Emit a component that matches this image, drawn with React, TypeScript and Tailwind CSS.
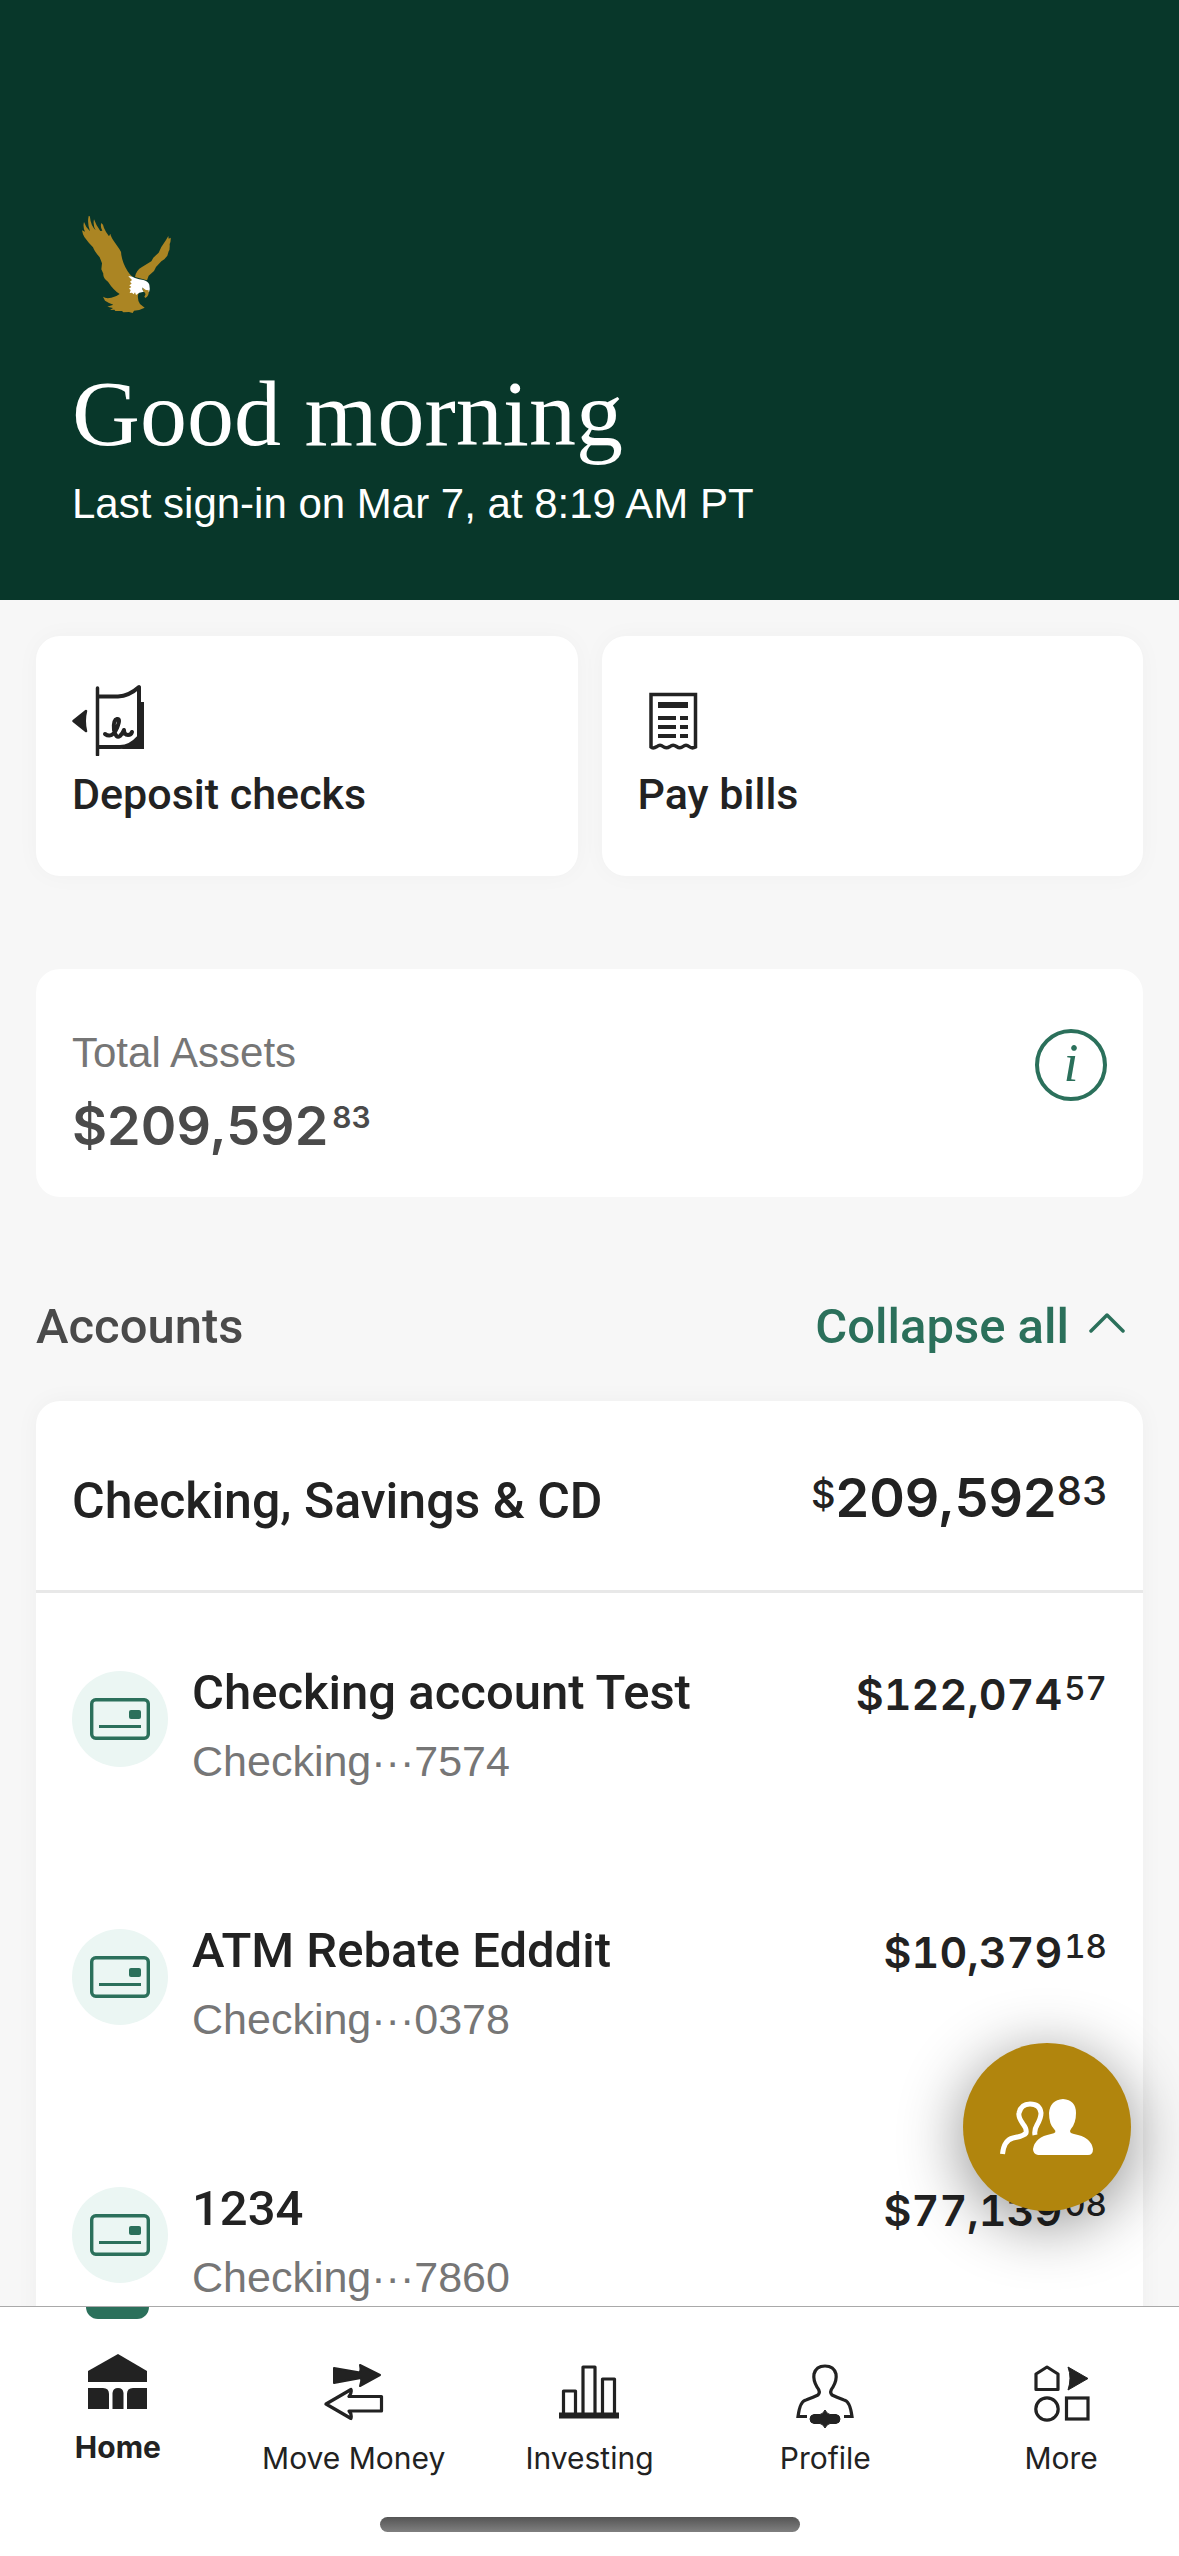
import type { ReactNode } from "react";

const accounts = [
  { name: "Checking account Test", detail: "Checking···7574", dollars: "$122,074", cents: "57" },
  { name: "ATM Rebate Edddit", detail: "Checking···0378", dollars: "$10,379", cents: "18" },
  { name: "1234", detail: "Checking···7860", dollars: "$77,139", cents: "08" },
];

function EagleLogo() {
  return (
    <svg viewBox="36 45 300 300" className="h-[100px] w-[100px]" aria-label="Eagle logo" role="img">
      <path
        fill="#ab8523"
        d="M66 91 L75 95 Q68 80 72 66 Q78 84 90 94 Q81 70 86 48 Q90 47 90 52 Q92 76 107 91 Q98 74 102 58 Q108 76 121 93 L127 92 Q120 80 124 69 Q130 72 132 84 Q136 94 147 109 L151 101 Q153 112 165 128 L178 147 Q184 154 184 165 Q188 190 203 214 Q210 225 217 230 L240 262 L234 285 Q232 300 240 312 L254 323 Q240 331 222 332 L218 339 L207 336 L190 337 L186 333 L166 333 L163 329 L150 330 L159 324 L142 320 L160 314 L147 309 L135 302 L129 290 Q138 297 154 293 Q170 290 179 282 Q160 270 144 245 Q128 234 130 221 L124 208 L126 190 L119 172 Q103 154 99 142 L87 129 L73 111 L69 103 Z"
      />
      <path
        fill="#ab8523"
        d="M225 231 Q228 211 246 201 L274 184 L280 173 L296 158 L304 141 L318 120 L325 108 L326 116 L332 113 Q333 124 329 132 Q330 150 326 154 L322 167 L313 178 L304 184 L288 201 L282 213 L266 227 L261 241 Z"
      />
      <path
        fill="#fff"
        d="M205 229 Q215 227 225 234 Q237 238 250 240 Q264 243 268 254 Q271 265 267 277 L256 274 Q249 267 247 262 Q246 271 252 276 Q240 274 228 285 L225 277 L221 283 L216 278 L209 279 L212 270 L207 266 L214 261 L208 256 L215 251 L210 245 L216 240 Z"
      />
      <path fill="#ab8523" d="M248 263 Q256 271 266 271 Q268 288 256 294 L253 290 Q259 283 255 278 Q248 275 248 263 Z" />
    </svg>
  );
}

function DepositIcon() {
  return (
    <svg viewBox="0 0 72 72" className="h-[72px] w-[72px]" fill="none" stroke="#222" aria-hidden="true">
      <path d="M1.500 37 L14 27 Q11.500 37 14 47 Z" fill="#222" strokeWidth="2.500" strokeLinejoin="round" />
      <path d="M25.500 4 V71" strokeWidth="3.500" strokeLinecap="round" />
      <path d="M26 12.500 H46 Q57 12 67 3 V53 Q58 63 48 63 H26" strokeWidth="4" strokeLinejoin="round" />
      <path d="M67 18 H72 V65 H48 Q60 62 66 53 Z" fill="#222" stroke="none" />
      <path
        d="M33 50 Q40 55 45 44 Q49 34 45 35 Q41 36 42 46 Q44 55 48 52 Q51 49 52 46 Q52 51 56 51 Q59 51 60 48"
        strokeWidth="4"
        strokeLinecap="round"
        strokeLinejoin="round"
      />
    </svg>
  );
}

function BillIcon() {
  return (
    <svg viewBox="0 0 72 72" className="h-[72px] w-[72px]" fill="none" stroke="#222" aria-hidden="true">
      <path
        d="M13 63 V10.500 H57.500 V63 Q54 65 51 62.500 Q48 60 45 62.500 Q42 65 38.500 62.500 Q35 60 32 62.500 Q28 65 25 62.500 Q22 60 19 62.500 Q15 65 13 63 Z"
        strokeWidth="3.500"
      />
      <path d="M20 21 H50" strokeWidth="6" />
      <path d="M20 34 H38 M42 34 H50 M20 43 H38 M42 43 H50 M20 52 H38 M42 52 H50" strokeWidth="4" />
    </svg>
  );
}

function AccountIcon() {
  return (
    <span className="flex size-24 shrink-0 items-center justify-center rounded-full bg-[#ebf6f3]">
      <svg viewBox="0 0 60 42" className="h-[42px] w-[60px]" fill="none" stroke="#2b705b" aria-hidden="true">
        <rect x="1.700" y="1.700" width="56.600" height="38.600" rx="4" strokeWidth="3.400" />
        <path d="M9 28.500 H51" strokeWidth="3" />
        <rect x="39" y="12" width="12" height="9" rx="2" fill="#2b705b" stroke="none" />
      </svg>
    </span>
  );
}

function HomeIcon() {
  return (
    <svg viewBox="0 0 60 60" className="size-[60px]" fill="#222" aria-hidden="true">
      <path d="M0 20 L30 3 L59 20 V31 H0 Z" />
      <path d="M0 37 H15 Q21 37 21 43 V58 H0 Z M59 37 H45 Q39 37 39 43 V58 H59 Z" />
      <path d="M24.500 58 V42 Q25 37 30 37 Q35 37 35.500 42 V58 Z" />
    </svg>
  );
}

function MoveIcon() {
  return (
    <svg viewBox="0 0 60 60" className="size-[60px]" fill="none" stroke="#222" strokeLinejoin="round" aria-hidden="true">
      <path d="M10 5 L36 9.500 Q37 6 36 2 L56 12 L36 23 Q38 18 37 15 L10 20 Z" fill="#222" strokeWidth="2" />
      <path d="M2 41 L27 26.500 Q28 30 25 33.500 H57.500 V48 H25 Q28 51 27 55.500 Z" strokeWidth="3.200" />
    </svg>
  );
}

function InvestIcon() {
  return (
    <svg viewBox="0 0 60 60" className="size-[60px]" fill="none" stroke="#222" aria-hidden="true">
      <path d="M0 52.500 H60" strokeWidth="6" />
      <path d="M4.500 50 V28 H16.500 V50 M24 50 V4 H36 V50 M43.500 50 V16 H55.500 V50" strokeWidth="3.200" strokeLinejoin="round" />
    </svg>
  );
}

function ProfileIcon() {
  return (
    <svg viewBox="0 0 60 66" className="h-[66px] w-[60px]" fill="none" stroke="#222" aria-hidden="true">
      <path
        d="M12 53.500 H3 Q5 38 11 37 Q19 34 23 32 Q26 29 22 24 Q18 17 19 11 Q21 3 30 3 Q39 3 41 11 Q42 17 38 24 Q34 29 37 32 Q41 34 49 37 Q55 38 57 53.500 H49"
        strokeWidth="3.200"
      />
      <path
        d="M30 47 Q32 51 35 51.500 H41 Q45 52 45 56 Q45 60 41 60.500 H35 Q32 61 30 65 Q28 61 25 60.500 H19 Q15 60 15 56 Q15 52 19 51.500 H25 Q28 51 30 47 Z"
        fill="#222"
        strokeWidth="1"
      />
    </svg>
  );
}

function MoreIcon() {
  return (
    <svg viewBox="0 0 60 60" className="size-[60px]" fill="none" stroke="#222" aria-hidden="true">
      <path d="M5 26.500 V11 L16 4 L27 11 V26.500 Z" strokeWidth="3.200" strokeLinejoin="round" />
      <path d="M37 4 L57 15.500 L37 27 Q41 15 37 4 Z" fill="#222" strokeWidth="1" strokeLinejoin="round" />
      <circle cx="16" cy="46" r="11.200" strokeWidth="3.200" />
      <rect x="35.500" y="35" width="21.500" height="21" strokeWidth="3.200" />
    </svg>
  );
}

function PeopleIcon() {
  return (
    <svg viewBox="0 0 96 60" className="h-[60px] w-[96px]" fill="none" aria-hidden="true">
      <path
        d="M3.500 57 Q5 43 14 41 Q25 39 27 36 Q28 32 24 27 Q19 20 20 16 Q22 7 31 7 Q41 7 42 16 Q42 21 38 28 Q35 33 36 38"
        stroke="#fff"
        strokeWidth="5"
      />
      <path
        fill="#fff"
        d="M64 2 Q77 3 77 16 Q77 26 72 32 Q69 36 75 37 Q92 40 94 52 Q94 58 89 58 H39 Q34 57 34 52 Q36 40 52 37 Q59 36 55 32 Q50 27 50 16 Q51 3 64 2 Z"
      />
    </svg>
  );
}

function ActionCard({ icon, label }: { icon: ReactNode; label: string }) {
  return (
    <button
      type="button"
      className="flex h-60 flex-1 flex-col items-start rounded-3xl bg-white px-9 pt-12 text-left shadow-[0_0_24px_rgba(0,0,0,0.03)]"
    >
      {icon}
      <span className="mt-[11px] font-[Roboto,sans-serif] text-[43px] leading-[54px] font-medium">{label}</span>
    </button>
  );
}

function NavItem({ icon, label, active = false }: { icon: ReactNode; label: string; active?: boolean }) {
  return (
    <li className="flex-1">
      <a
        href="#"
        aria-current={active ? "page" : undefined}
        className="flex flex-col items-center font-[Inter,sans-serif] text-[30px] leading-10"
      >
        <span className={active ? "h-3 w-[63px] rounded-b-xl bg-[#2b705b]" : "h-3"} />
        <span className={active ? "mt-8 flex h-[66px] items-start" : "mt-11 flex h-[66px] items-start"}>{icon}</span>
        <span className={active ? "mt-[10px] font-bold" : "mt-[9px]"}>{label}</span>
      </a>
    </li>
  );
}

export default function App() {
  return (
    <div className="flex h-screen flex-col bg-[#f7f7f7] font-['Liberation_Sans',sans-serif] text-[#222]">
      <div className="relative min-h-0 flex-1">
        <main className="h-full overflow-y-auto [scrollbar-width:none]">
          <header className="h-[600px] bg-[#08372a] px-[72px] pt-[215px] text-white">
            <EagleLogo />
            <h1 className="mt-12 font-['Liberation_Serif',serif] text-[94px] leading-[100px]">Good morning</h1>
            <p className="mt-4 text-[42px] leading-[50px]">Last sign-in on Mar 7, at 8:19 AM PT</p>
          </header>

          <div className="px-9 pt-9">
            <div className="flex gap-6">
              <ActionCard icon={<DepositIcon />} label="Deposit checks" />
              <ActionCard icon={<BillIcon />} label="Pay bills" />
            </div>

            <section className="mt-[93px] flex h-[228px] items-start justify-between rounded-3xl bg-white px-9 pt-[58px]">
              <div>
                <h2 className="text-[42px] leading-[52px] text-[#767676]">Total Assets</h2>
                <p className="mt-3 flex items-start gap-1 font-[Inter,sans-serif] font-semibold text-[#4a4a4a]">
                  <span className="text-[54px] leading-[70px]">$209,592</span>
                  <span className="pt-2 text-[30px] leading-9">83</span>
                </p>
              </div>
              <button
                type="button"
                aria-label="About total assets"
                className="mt-0.5 flex size-[72px] items-center justify-center rounded-full border-4 border-[#2b705b] pb-1 font-['Liberation_Serif',serif] text-[54px] leading-none text-[#2b705b] italic"
              >
                i
              </button>
            </section>

            <div className="mt-[98px] flex items-center justify-between font-[Roboto,sans-serif] text-[49px] leading-[64px] font-medium">
              <h2 className="text-[#4a4a4a]">Accounts</h2>
              <button type="button" className="flex items-center gap-5 pr-[18px] text-[#2b705b]">
                Collapse all
                <svg viewBox="0 0 36 20" className="mb-2 h-5 w-9" fill="none" stroke="currentColor" aria-hidden="true">
                  <path d="M2 18 L18 2 L34 18" strokeWidth="3.500" strokeLinecap="round" strokeLinejoin="round" />
                </svg>
              </button>
            </div>

            <section className="mt-[42px] rounded-t-3xl bg-white shadow-[0_0_24px_rgba(0,0,0,0.04)]">
              <div className="flex h-48 items-start justify-between border-b-3 border-[#e8e8e8] px-9 pt-[68px]">
                <h3 className="font-[Roboto,sans-serif] text-[50px] leading-[64px] font-medium">Checking, Savings &amp; CD</h3>
                <p className="flex items-start font-[Inter,sans-serif]">
                  <span className="text-[38px] leading-[50px] font-medium">$</span>
                  <span className="text-[54px] leading-[58px] font-semibold">209,592</span>
                  <span className="text-[40px] leading-[44px] font-medium">83</span>
                </p>
              </div>
              <ul>
                {accounts.map((a) => (
                  <li key={a.name} className="flex h-[258px] items-start gap-6 px-9 pt-[78px]">
                    <AccountIcon />
                    <div className="-mt-[10px] flex-1">
                      <div className="flex items-start justify-between">
                        <h4 className="font-[Roboto,sans-serif] text-[49px] leading-[64px] font-medium">{a.name}</h4>
                        <p className="flex items-start gap-0.5 font-[Inter,sans-serif] tabular-nums">
                          <span className="text-[43px] leading-[66px] font-semibold">{a.dollars}</span>
                          <span className="text-[33px] leading-[54px] font-medium">{a.cents}</span>
                        </p>
                      </div>
                      <p className="mt-1 text-[43px] leading-[60px] text-[#767676]">{a.detail}</p>
                    </div>
                  </li>
                ))}
              </ul>
            </section>
          </div>
        </main>

        <button
          type="button"
          aria-label="Contact an advisor"
          className="absolute right-12 bottom-[95px] flex size-[168px] items-center justify-center rounded-full bg-[#b1850d] shadow-[0_12px_64px_rgba(0,0,0,0.45)]"
        >
          <PeopleIcon />
        </button>
      </div>

      <nav className="relative border-t border-[#a9a9a9] bg-white pb-6">
        <ul className="flex h-[210px]">
          <NavItem icon={<HomeIcon />} label="Home" active />
          <NavItem icon={<MoveIcon />} label="Move Money" />
          <NavItem icon={<InvestIcon />} label="Investing" />
          <NavItem icon={<ProfileIcon />} label="Profile" />
          <NavItem icon={<MoreIcon />} label="More" />
        </ul>
        <div className="mx-auto h-[15px] w-[420px] rounded-full bg-linear-to-b from-[#555] to-[#808080]" />
      </nav>
    </div>
  );
}
